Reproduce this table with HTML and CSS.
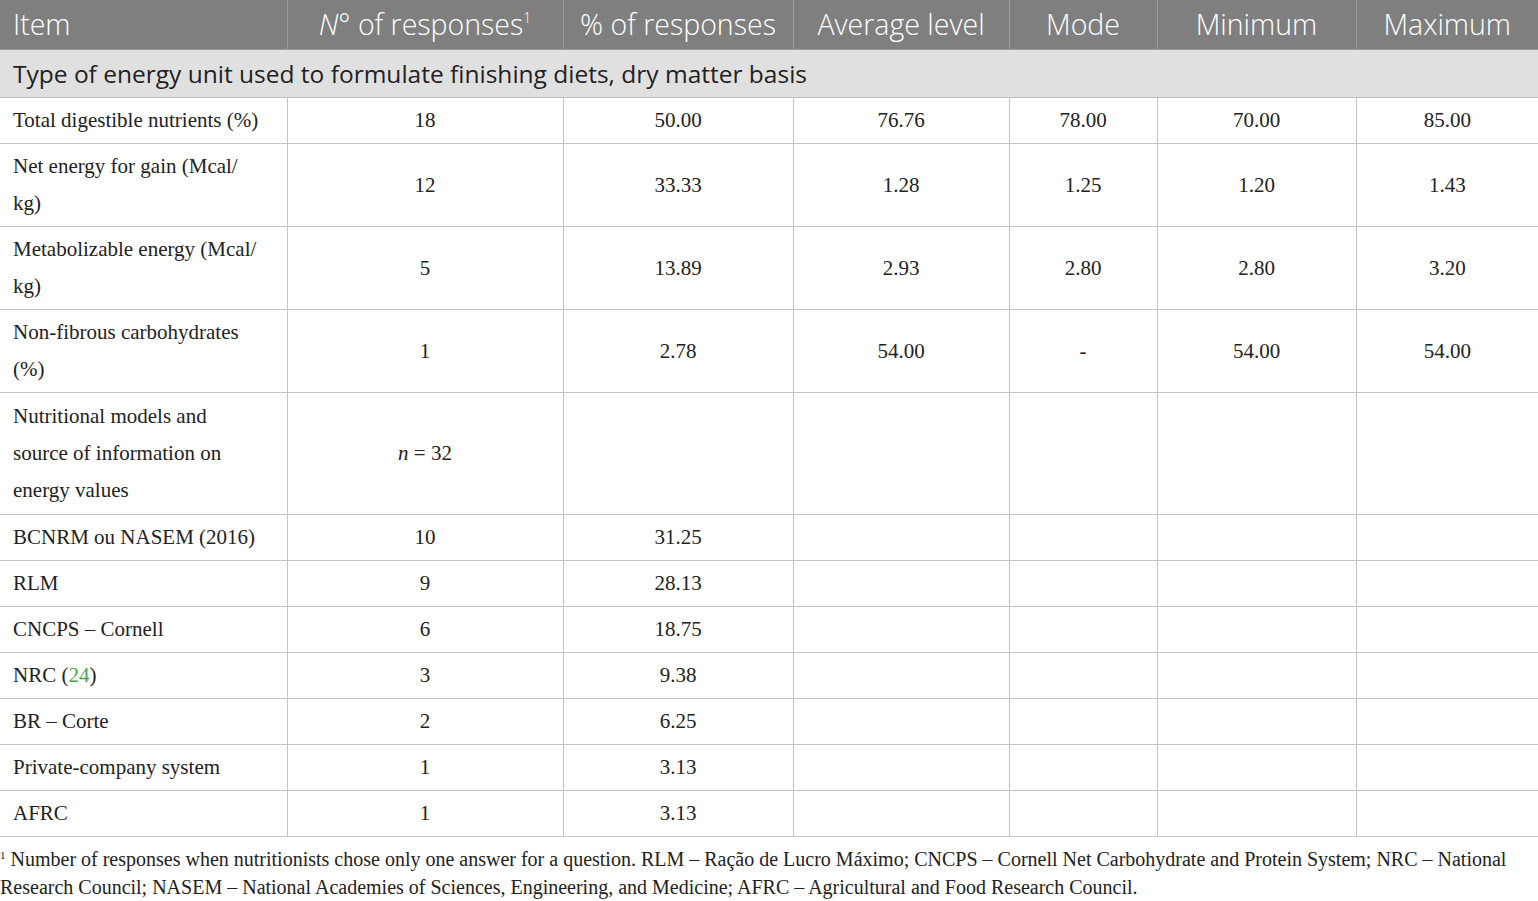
FILE: index.html
```html
<!DOCTYPE html>
<html lang="en">
<head>
<meta charset="utf-8">
<title>Energy units table</title>
<link rel="stylesheet" href="styles.css">
</head>
<body>
<table class="data">
  <colgroup>
    <col class="c1"><col class="c2"><col class="c3"><col class="c4"><col class="c5"><col class="c6"><col class="c7">
  </colgroup>
  <thead>
    <tr class="head">
      <th class="left">Item</th>
      <th><i>N</i>° of responses<span class="hsup">1</span></th>
      <th>% of responses</th>
      <th>Average level</th>
      <th>Mode</th>
      <th>Minimum</th>
      <th>Maximum</th>
    </tr>
  </thead>
  <tbody>
    <tr class="section"><td colspan="7">Type of energy unit used to formulate finishing diets, dry matter basis</td></tr>
    <tr><td class="left">Total digestible nutrients (%)</td><td>18</td><td>50.00</td><td>76.76</td><td>78.00</td><td>70.00</td><td>85.00</td></tr>
    <tr><td class="left">Net energy for gain (Mcal/<br>kg)</td><td>12</td><td>33.33</td><td>1.28</td><td>1.25</td><td>1.20</td><td>1.43</td></tr>
    <tr><td class="left">Metabolizable energy (Mcal/<br>kg)</td><td>5</td><td>13.89</td><td>2.93</td><td>2.80</td><td>2.80</td><td>3.20</td></tr>
    <tr><td class="left">Non-fibrous carbohydrates<br>(%)</td><td>1</td><td>2.78</td><td>54.00</td><td>-</td><td>54.00</td><td>54.00</td></tr>
    <tr class="tall"><td class="left">Nutritional models and<br>source of information on<br>energy values</td><td><i>n</i> = 32</td><td></td><td></td><td></td><td></td><td></td></tr>
    <tr><td class="left">BCNRM ou NASEM (2016)</td><td>10</td><td>31.25</td><td></td><td></td><td></td><td></td></tr>
    <tr><td class="left">RLM</td><td>9</td><td>28.13</td><td></td><td></td><td></td><td></td></tr>
    <tr><td class="left">CNCPS – Cornell</td><td>6</td><td>18.75</td><td></td><td></td><td></td><td></td></tr>
    <tr><td class="left">NRC (<span class="ref">24</span>)</td><td>3</td><td>9.38</td><td></td><td></td><td></td><td></td></tr>
    <tr><td class="left">BR – Corte</td><td>2</td><td>6.25</td><td></td><td></td><td></td><td></td></tr>
    <tr><td class="left">Private-company system</td><td>1</td><td>3.13</td><td></td><td></td><td></td><td></td></tr>
    <tr><td class="left">AFRC</td><td>1</td><td>3.13</td><td></td><td></td><td></td><td></td></tr>
  </tbody>
</table>
<p class="foot"><span class="fsup">1</span> Number of responses when nutritionists chose only one answer for a question. RLM – Ração de Lucro Máximo; CNCPS – Cornell Net Carbohydrate and Protein System; NRC – National Research Council; NASEM – National Academies of Sciences, Engineering, and Medicine; AFRC – Agricultural and Food Research Council.</p>
</body>
</html>
```

FILE: styles.css
```css
html, body {
  margin: 0;
  padding: 0;
  background: #ffffff;
}

.data {
  width: 1538px;
  border-collapse: collapse;
  table-layout: fixed;
  font-family: "Liberation Serif", "Times New Roman", serif;
  font-size: 21px;
  color: #222222;
}

.c1 { width: 287px; }
.c2 { width: 276px; }
.c3 { width: 230px; }
.c4 { width: 216px; }
.c5 { width: 148px; }
.c6 { width: 199px; }
.c7 { width: 182px; }

.head th {
  background: #7f7f7f;
  color: #ffffff;
  font-family: "Open Sans", "Noto Sans", sans-serif;
  font-weight: 300;
  font-size: 28.5px;
  line-height: 49px;
  height: 49px;
  padding: 0 13px;
  text-align: center;
  border-left: 1px solid #9a9a9a;
  border-bottom: 1px solid #9a9a9a;
  white-space: nowrap;
}

.head th:first-child { border-left: none; }

.head th.left { text-align: left; }

.hsup {
  font-size: 14px;
  vertical-align: top;
  line-height: 36px;
}

.section td {
  background: #e1e0e1;
  color: #222222;
  font-family: "Open Sans", "Noto Sans", sans-serif;
  font-size: 24.5px;
  height: 47px;
  padding: 0 13px;
  text-align: left;
  border-bottom: 1px solid #bdbdbd;
  white-space: nowrap;
}

tbody td {
  line-height: 37px;
  padding: 4px 13px;
  text-align: center;
  vertical-align: middle;
  border: 1px solid #c4c4c4;
  white-space: nowrap;
}

tbody tr.tall td {
  padding-top: 5px;
  padding-bottom: 5px;
}

tbody tr td:first-child { border-left: none; }
tbody tr td:last-child { border-right: none; }

tbody td.left { text-align: left; }

.ref { color: #4ea44a; }

.foot {
  margin: 8px 0 0 0;
  font-family: "Liberation Serif", "Times New Roman", serif;
  font-size: 20px;
  line-height: 28px;
  color: #222222;
}

.fsup {
  font-size: 11px;
  vertical-align: top;
  line-height: 20px;
}
```
